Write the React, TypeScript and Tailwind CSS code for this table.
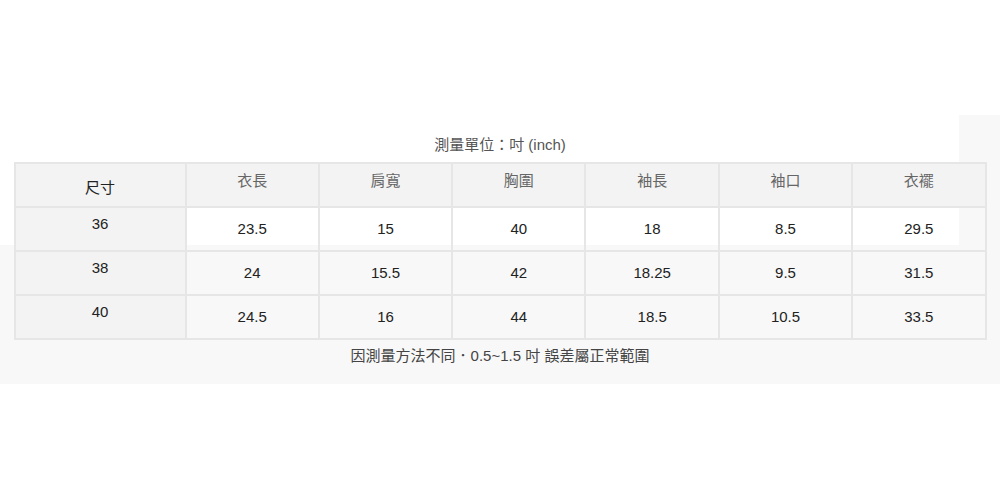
const COLS = ['衣長', '肩寬', '胸圍', '袖長', '袖口', '衣襬']

const ROWS: { size: string; values: string[] }[] = [
  { size: '36', values: ['23.5', '15', '40', '18', '8.5', '29.5'] },
  { size: '38', values: ['24', '15.5', '42', '18.25', '9.5', '31.5'] },
  { size: '40', values: ['24.5', '16', '44', '18.5', '10.5', '33.5'] },
]

export default function App() {
  return (
    <div
      className="relative w-full h-[500px] bg-white overflow-hidden"
      style={{ fontFamily: '"Liberation Sans", "Noto Sans CJK TC", sans-serif' }}
    >
      {/* faint backdrop panels behind the chart */}
      <div className="absolute left-0 right-0 top-[245px] h-[139px] bg-[#f8f8f8]" />
      <div className="absolute left-[959px] right-0 top-[115px] h-[130px] bg-[#f8f8f8]" />

      <div className="relative flex flex-col items-center pt-[135px]">
        <p className="text-[15px] leading-[20px] text-[#555]">測量單位：吋 (inch)</p>

        <table className="mt-[7px] w-[973px] table-fixed border-collapse text-[15px] leading-[20px]">
          <colgroup>
            <col className="w-[171px]" />
            {COLS.map((c) => (
              <col key={c} />
            ))}
          </colgroup>
          <thead>
            <tr className="h-[44px] bg-[#f3f3f3]">
              <th className="border-2 border-[#e6e6e6] pt-[5px] font-normal text-[#222]">尺寸</th>
              {COLS.map((c) => (
                <th key={c} className="border-2 border-[#e6e6e6] pb-[8px] font-normal text-[#666]">
                  {c}
                </th>
              ))}
            </tr>
          </thead>
          <tbody>
            {ROWS.map((r) => (
              <tr key={r.size} className="h-[44px]">
                <td className="border-2 border-[#e6e6e6] bg-[#f3f3f3] pb-[10px] text-center text-[#222]">
                  {r.size}
                </td>
                {r.values.map((v, j) => (
                  <td key={j} className="border-2 border-[#e6e6e6] text-center text-[#222]">
                    {v}
                  </td>
                ))}
              </tr>
            ))}
          </tbody>
        </table>

        <p className="mt-[6px] text-[15px] leading-[20px] text-[#444]">
          因測量方法不同．0.5~1.5 吋 誤差屬正常範圍
        </p>
      </div>
    </div>
  )
}
